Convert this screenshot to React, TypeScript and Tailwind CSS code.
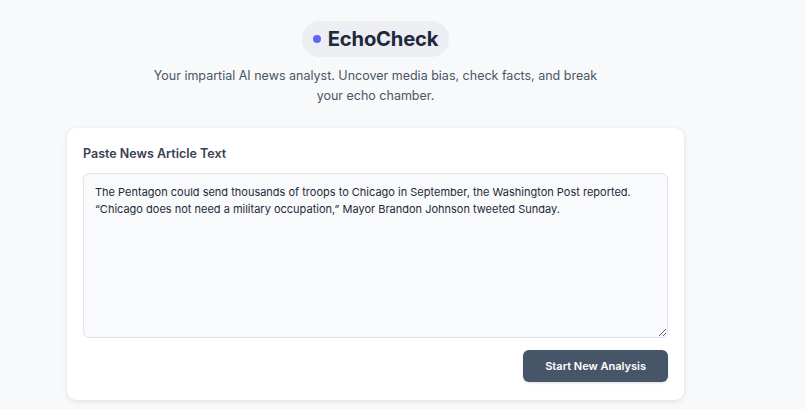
import React from "react";

export default function App() {
  const text =
    "The Pentagon could send thousands of troops to Chicago in September, the Washington Post reported.\n\u201CChicago does not need a military occupation,\u201D Mayor Brandon Johnson tweeted Sunday.";
  return (
    <div
      className="min-h-[409px] w-full bg-[#f8f9fb] text-[#1e293b]"
      style={{ fontFamily: "Inter, 'Noto Sans', sans-serif" }}
    >
      <div className="flex w-[751px] flex-col items-center pt-[21px]">
        <div className="flex h-[36px] items-center gap-[7px] rounded-full bg-[#eceef4] pl-[11px] pr-[11px]">
          <span className="h-[8px] w-[8px] rounded-full bg-[#6366f1]" />
          <h1 className="text-[20.2px] font-bold leading-none tracking-[-0.2px] text-[#1e293b]">EchoCheck</h1>
        </div>
        <p className="mt-[9px] max-w-[450px] text-center text-[12.5px] leading-[20px] text-[#4b5563]">
          Your impartial AI news analyst. Uncover media bias, check facts, and break your echo chamber.
        </p>
        <div className="mt-[22px] w-[617px] rounded-[9px] bg-white px-[16px] pb-[18px] pt-[16px] shadow-[0_1px_4px_rgba(15,23,42,0.08),0_2px_8px_rgba(15,23,42,0.04)]">
          <label className="block text-[12.5px] font-semibold leading-[20px] text-[#374151]">
            Paste News Article Text
          </label>
          <textarea
            className="mt-[9px] block h-[165px] w-full resize-y rounded-[6px] border border-[#dfe3ea] bg-[#f8fafc] px-[11px] py-[10px] text-[11px] leading-[17px] text-[#1f2937] outline-none"
            defaultValue={text}
          />
          <div className="mt-[12px] flex justify-end">
            <button className="h-[32px] rounded-[6px] bg-[#475569] px-[22px] text-[11px] font-semibold text-white shadow-sm">
              Start New Analysis
            </button>
          </div>
        </div>
      </div>
    </div>
  );
}
